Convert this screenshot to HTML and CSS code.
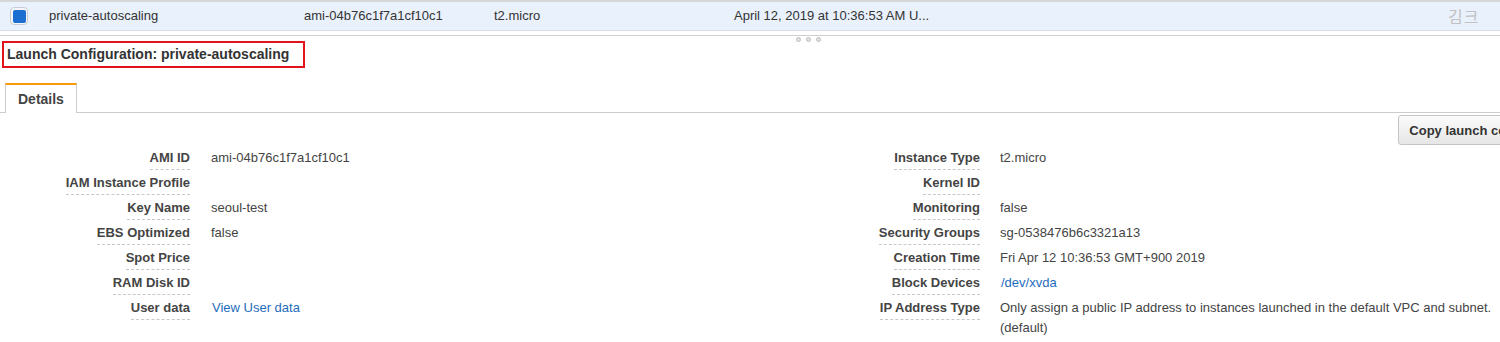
FILE: index.html
```html
<!DOCTYPE html>
<html lang="en">
<head>
<meta charset="utf-8">
<title>Launch Configuration</title>
<link rel="stylesheet" href="styles.css">
</head>
<body>
<div class="viewport">
  <div class="grid-top"></div>
  <div class="grid-row selected">
    <span class="cell cell-check"><span class="checkbox"><span class="checkbox-fill"></span></span></span>
    <span class="cell cell-name">private-autoscaling</span>
    <span class="cell cell-ami">ami-04b76c1f7a1cf10c1</span>
    <span class="cell cell-type">t2.micro</span>
    <span class="cell cell-time">April 12, 2019 at 10:36:53 AM U...</span>
    <span class="cell cell-ko">김크</span>
  </div>
  <div class="splitter">
    <div class="splitter-dots"><span class="dot"></span><span class="dot"></span><span class="dot"></span></div>
  </div>
  <div class="panel">
    <h2 class="panel-title">Launch Configuration: private-autoscaling</h2>
    <div class="tabbar">
      <div class="tab active">Details</div>
    </div>
    <div class="toolbar">
      <button class="btn">Copy launch configuration</button>
    </div>
    <div class="details">
      <div class="detail-group left">
        <div class="detail-row"><span class="dl"><span class="label">AMI ID</span></span><span class="dv">ami-04b76c1f7a1cf10c1</span></div>
        <div class="detail-row"><span class="dl"><span class="label">IAM Instance Profile</span></span><span class="dv"></span></div>
        <div class="detail-row"><span class="dl"><span class="label">Key Name</span></span><span class="dv">seoul-test</span></div>
        <div class="detail-row"><span class="dl"><span class="label">EBS Optimized</span></span><span class="dv">false</span></div>
        <div class="detail-row"><span class="dl"><span class="label">Spot Price</span></span><span class="dv"></span></div>
        <div class="detail-row"><span class="dl"><span class="label">RAM Disk ID</span></span><span class="dv"></span></div>
        <div class="detail-row"><span class="dl"><span class="label">User data</span></span><span class="dv"><a class="link link-pad" href="#">View User data</a></span></div>
      </div>
      <div class="detail-group right">
        <div class="detail-row"><span class="dl"><span class="label">Instance Type</span></span><span class="dv">t2.micro</span></div>
        <div class="detail-row"><span class="dl"><span class="label">Kernel ID</span></span><span class="dv"></span></div>
        <div class="detail-row"><span class="dl"><span class="label">Monitoring</span></span><span class="dv">false</span></div>
        <div class="detail-row"><span class="dl"><span class="label">Security Groups</span></span><span class="dv">sg-0538476b6c3321a13</span></div>
        <div class="detail-row"><span class="dl"><span class="label">Creation Time</span></span><span class="dv">Fri Apr 12 10:36:53 GMT+900 2019</span></div>
        <div class="detail-row"><span class="dl"><span class="label">Block Devices</span></span><span class="dv"><a class="link link-pad" href="#">/dev/xvda</a></span></div>
        <div class="detail-row"><span class="dl"><span class="label">IP Address Type</span></span><span class="dv">Only assign a public IP address to instances launched in the default VPC and subnet. (default)</span></div>
      </div>
    </div>
  </div>
</div>
</body>
</html>
```

FILE: styles.css
```css
html, body {
  margin: 0;
  padding: 0;
  background: #fff;
  overflow: hidden;
}

body {
  font-family: "Liberation Sans", Arial, sans-serif;
  font-size: 13px;
  color: #444;
}

.viewport {
  width: 1500px;
  height: 342px;
  overflow: hidden;
}

.grid-top {
  height: 2px;
  background: #d6d6d6;
}

.grid-row {
  display: flex;
  align-items: center;
  height: 28px;
  border-bottom: 1px solid #d4dde8;
}

.grid-row.selected {
  background: #e9f1fc;
}

.cell {
  white-space: nowrap;
  color: #333;
  line-height: 16px;
}

.cell-check {
  width: 49px;
  display: flex;
  padding-left: 10px;
  box-sizing: border-box;
}

.checkbox {
  width: 18px;
  height: 18px;
  box-sizing: border-box;
  border: 1px solid #c9cdd3;
  border-radius: 4px;
  background: #f4f6f9;
  display: flex;
  align-items: center;
  justify-content: center;
}

.checkbox-fill {
  width: 13px;
  height: 13px;
  border-radius: 2px;
  background: #1d6ed1;
}

.cell-name { width: 255px; }
.cell-ami { width: 190px; }
.cell-type { width: 240px; }
.cell-time { width: 714px; }

.cell-ko {
  font-family: "Noto Sans CJK KR", sans-serif;
  font-size: 16px;
  color: #c2c2c2;
  letter-spacing: 1px;
}

.splitter {
  position: relative;
  margin-top: 4px;
  height: 1px;
  background: #cfcfcf;
}

.splitter-dots {
  position: absolute;
  left: 796px;
  top: 2px;
  display: flex;
  gap: 5px;
}

.dot {
  width: 5px;
  height: 5px;
  box-sizing: border-box;
  border-radius: 50%;
  border: 1px solid #bdbdbd;
  background: #e2e2e2;
}

.panel {
  width: 1590px;
}

.panel-title {
  margin: 5px 0 0 2px;
  display: inline-block;
  border: 2px solid #e3131c;
  padding: 0 14px 0 3px;
  font-size: 14px;
  font-weight: bold;
  line-height: 23px;
  color: #333;
}

.tabbar {
  margin-top: 15px;
  display: flex;
  padding-left: 5px;
  border-bottom: 1px solid #cccccc;
}

.tab {
  height: 28px;
  line-height: 28px;
  padding: 0 12px;
  border-top: 2px solid #f79a0e;
  border-left: 1px solid #cccccc;
  border-right: 1px solid #cccccc;
  background: #fff;
  margin-bottom: -1px;
  font-size: 14px;
  font-weight: bold;
  color: #444;
}

.toolbar {
  display: flex;
  justify-content: flex-end;
  padding: 2px 5px 0 0;
}

.btn {
  height: 30px;
  padding: 0 10px;
  border: 1px solid #c4c4c4;
  border-radius: 3px;
  background: linear-gradient(#fbfbfb, #e6e6e6);
  font-family: "Liberation Sans", Arial, sans-serif;
  font-size: 13px;
  font-weight: bold;
  color: #333;
  white-space: nowrap;
}

.details {
  margin-top: 5px;
  display: grid;
  grid-template-columns: 790px 1fr;
}

.detail-group {
  display: flex;
  flex-direction: column;
}

.detail-row {
  display: grid;
  grid-template-columns: 190px 500px;
  column-gap: 20px;
  min-height: 25px;
  align-items: start;
}

.dl {
  text-align: right;
}

.label {
  display: inline-block;
  line-height: 16px;
  padding-bottom: 3px;
  border-bottom: 1px dashed #c8c8c8;
  font-weight: bold;
  color: #444;
}

.dv {
  line-height: 20px;
  margin-top: -2px;
  color: #444;
}

.left .dv {
  padding-left: 1px;
}

.link {
  color: #1f6dbd;
  text-decoration: none;
}

.link-pad {
  padding-left: 1px;
}
```
